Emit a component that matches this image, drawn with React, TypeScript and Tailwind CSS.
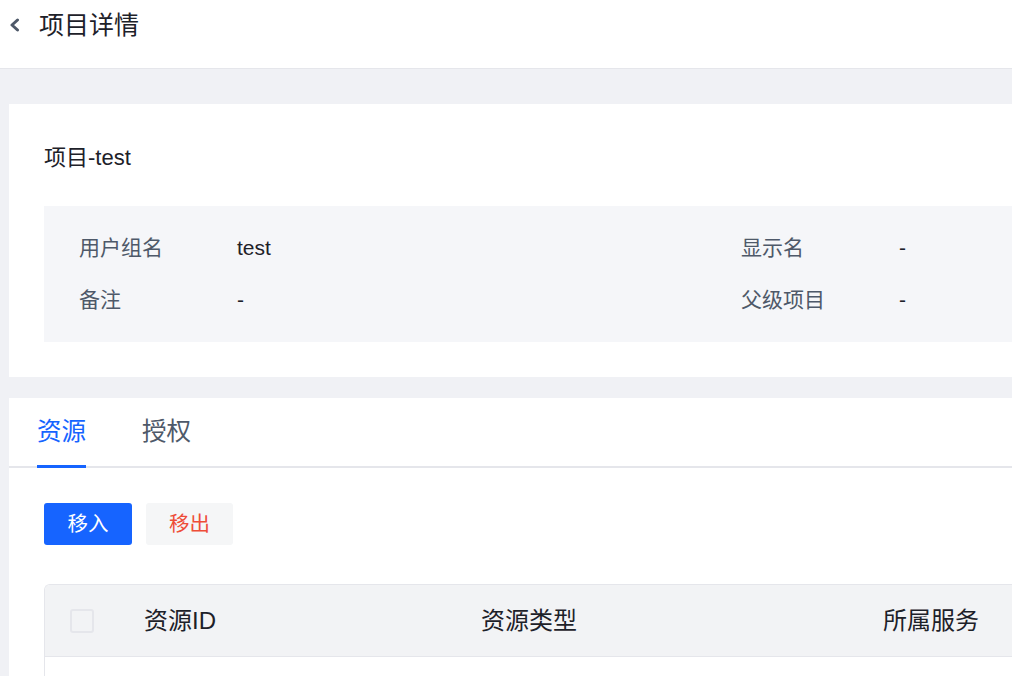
const font = { fontFamily: '"Liberation Sans", "Noto Sans CJK SC", sans-serif' };

function InfoItem({ label, value }: { label: string; value: string }) {
  return (
    <div className="flex w-[662px] shrink-0">
      <span className="w-[158px] shrink-0 text-[#4e5969]">{label}</span>
      <span className="text-[#1d2129]">{value}</span>
    </div>
  );
}

export default function App() {
  return (
    <div style={font} className="h-[676px] w-[1012px] overflow-hidden bg-[#f0f1f5]">
      {/* Header */}
      <div className="flex h-[69px] items-start border-b border-[#e5e6eb] bg-white pt-[11px]">
        <svg className="ml-[8px] mt-[7px] h-[14px] w-[12px]" viewBox="0 0 12 14" fill="none">
          <polyline points="9.5,2 4,7 9.5,12" stroke="#4e5969" strokeWidth="3" strokeLinecap="round" strokeLinejoin="round" />
        </svg>
        <h1 className="ml-[19px] text-[25px] leading-[28px] text-[#1d2129]">项目详情</h1>
      </div>

      <div className="pl-[9px] pt-[35px]">
        {/* Basic info card */}
        <div className="bg-white pl-[35px] pt-[39px] pb-[35px]">
          <div className="text-[22px] leading-[30px] text-[#1d2129]">项目-test</div>
          <div className="mt-[33px] flex flex-col gap-[22px] bg-[#f5f6f9] py-[27px] pl-[35px] text-[21px] leading-[30px]">
            <div className="flex">
              <InfoItem label="用户组名" value="test" />
              <InfoItem label="显示名" value="-" />
            </div>
            <div className="flex">
              <InfoItem label="备注" value="-" />
              <InfoItem label="父级项目" value="-" />
            </div>
          </div>
        </div>

        {/* Tabs card */}
        <div className="mt-[21px] bg-white">
          <div className="flex h-[70px] gap-[56px] border-b-2 border-[#e5e6eb] pl-[28px]">
            <div className="relative flex items-center text-[24.5px] text-[#1664ff]">
              资源
              <span className="absolute bottom-[-2px] left-0 right-0 h-[3px] bg-[#1664ff]" />
            </div>
            <div className="flex items-center text-[24.5px] text-[#4e5969]">授权</div>
          </div>

          <div className="pl-[35px] pt-[35px]">
            <div className="flex gap-[14px]">
              <button className="h-[42px] w-[88px] rounded-[3px] bg-[#1664ff] text-[20.5px] text-white">移入</button>
              <button className="h-[42px] w-[87px] rounded-[3px] bg-[#f5f6f7] text-[20.5px] text-[#ee4d38]">移出</button>
            </div>

            <div className="mt-[39px] overflow-hidden rounded-tl-[6px] border-l border-t border-[#e5e6eb]">
              <div className="flex h-[72px] items-center border-b border-[#e5e6eb] bg-[#f2f3f5] text-[24px] text-[#1d2129]">
                <span className="ml-[25px] h-[24px] w-[24px] shrink-0 rounded-[3px] border-2 border-[#e5e6eb] bg-[#f2f3f5]" />
                <span className="ml-[50px] w-[337px] shrink-0">资源ID</span>
                <span className="w-[402px] shrink-0">资源类型</span>
                <span className="shrink-0">所属服务</span>
              </div>
              <div className="h-[30px] bg-white" />
            </div>
          </div>
        </div>
      </div>
    </div>
  );
}
